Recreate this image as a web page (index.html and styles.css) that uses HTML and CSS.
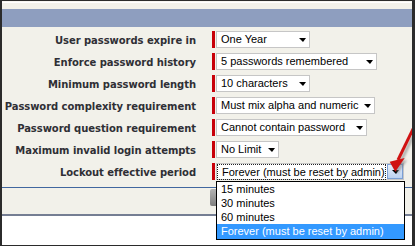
FILE: index.html
```html
<!DOCTYPE html>
<html>
<head>
<meta charset="utf-8">
<link rel="stylesheet" href="styles.css">
</head>
<body>
<div class="frame">
  <div class="topstrip"></div>
  <div class="band"></div>
  <div class="form">
    <div class="row">
      <div class="label">User passwords expire in</div>
      <div class="field"><span class="req"></span><div class="select w94"><span class="val">One Year</span><span class="caret"></span></div></div>
    </div>
    <div class="row">
      <div class="label">Enforce password history</div>
      <div class="field"><span class="req"></span><div class="select w161"><span class="val">5 passwords remembered</span><span class="caret"></span></div></div>
    </div>
    <div class="row">
      <div class="label">Minimum password length</div>
      <div class="field"><span class="req"></span><div class="select w94"><span class="val">10 characters</span><span class="caret"></span></div></div>
    </div>
    <div class="row">
      <div class="label">Password complexity requirement</div>
      <div class="field"><span class="req"></span><div class="select w159"><span class="val">Must mix alpha and numeric</span><span class="caret"></span></div></div>
    </div>
    <div class="row">
      <div class="label">Password question requirement</div>
      <div class="field"><span class="req"></span><div class="select w151"><span class="val">Cannot contain password</span><span class="caret"></span></div></div>
    </div>
    <div class="row">
      <div class="label">Maximum invalid login attempts</div>
      <div class="field"><span class="req"></span><div class="select w63"><span class="val">No Limit</span><span class="caret"></span></div></div>
    </div>
    <div class="row">
      <div class="label">Lockout effective period</div>
      <div class="field"><span class="req"></span><div class="select w187 focused"><span class="focus">Forever (must be reset by admin)</span><span class="btn"><span class="caret"></span></span></div></div>
    </div>
  </div>
  <div class="sep"></div>
  <div class="buttons"><span class="save"></span></div>
  <div class="rule"></div>
  <div class="white"></div>

  <ul class="list">
    <li>15 minutes</li>
    <li>30 minutes</li>
    <li>60 minutes</li>
    <li class="sel">Forever (must be reset by admin)</li>
  </ul>

  <svg class="pointer" width="34" height="66" viewBox="0 0 34 66">
    <defs>
      <filter id="blur" x="-50%" y="-50%" width="200%" height="200%">
        <feGaussianBlur stdDeviation="1.2"/>
      </filter>
    </defs>
    <g filter="url(#blur)" opacity="0.55" transform="translate(2.5,2)">
      <line x1="37" y1="10" x2="20" y2="45" stroke="#777" stroke-width="3"/>
      <polygon points="11.7,46.7 26.7,43 17.3,56.7" fill="#777"/>
    </g>
    <line x1="37" y1="10" x2="20" y2="45" stroke="#d01212" stroke-width="3"/>
    <polygon points="11.7,46.7 26.7,43 17.3,56.7" fill="#d01212"/>
  </svg>
</div>
</body>
</html>
```

FILE: styles.css
```css
html, body {
  margin: 0;
  padding: 0;
  background: #ffffff;
}

.frame {
  position: relative;
  box-sizing: border-box;
  width: 415px;
  height: 246px;
  border-top: 1px solid #2b2b2b;
  border-left: 2px solid #2b2b2b;
  border-right: 3px solid #2b2b2b;
  border-bottom: 1px solid #2b2b2b;
  background: #f2f1ea;
  overflow: hidden;
  display: flex;
  flex-direction: column;
}

.topstrip {
  height: 8px;
  background: linear-gradient(#f7f6f1 0, #f7f6f1 1px, #ffffff 1px, #ffffff 2px, #f2f1ea 2px);
}

.band {
  height: 18px;
  background: #8e9ebf;
}

.form {
  padding: 2px 0 4px 0;
  display: flex;
  flex-direction: column;
}

.row {
  display: flex;
  align-items: center;
  height: 22px;
}

.label {
  width: 194px;
  text-align: right;
  font-family: "DejaVu Sans", sans-serif;
  font-weight: bold;
  font-size: 10px;
  color: #2f2f35;
  white-space: nowrap;
  letter-spacing: -0.05px;
}

.field {
  margin-left: 16px;
  display: flex;
  align-items: center;
  margin-top: -1px;
}

.req {
  width: 3px;
  height: 17px;
  background: #c8000a;
  margin-right: 1px;
}

.select {
  box-sizing: border-box;
  height: 17px;
  background: #ffffff;
  border: 1px solid #c6c6c6;
  display: flex;
  align-items: center;
  font-family: "Liberation Sans", Arial, sans-serif;
  font-size: 11px;
  color: #000;
  white-space: nowrap;
}

.val {
  padding-left: 4px;
  line-height: 15px;
}

.caret {
  width: 0;
  height: 0;
  border-top: 4px solid #000;
  border-left: 4px solid transparent;
  border-right: 3px solid transparent;
  margin-left: auto;
  margin-right: 3px;
}

.w94 { width: 94px; }
.w161 { width: 161px; }
.w159 { width: 159px; }
.w151 { width: 151px; }
.w63 { width: 63px; }
.w187 { width: 188px; }

.focused {
  border-color: #c6c6c6;
  padding: 0;
}

.focus {
  box-sizing: border-box;
  width: 169px;
  height: 16px;
  margin-top: 1px;
  border: 1px dotted #222;
  padding-left: 4px;
  line-height: 14px;
}

.btn {
  box-sizing: border-box;
  width: 16px;
  height: 15px;
  margin-left: 1px;
  border: 1px solid #7b9fd4;
  background: linear-gradient(#e6effb, #bcd2f1);
  display: flex;
  align-items: center;
  justify-content: center;
}

.btn .caret {
  margin: 1px 0 0 0;
}

.sep {
  height: 1px;
  background: #41679f;
}

.buttons {
  height: 26px;
  display: flex;
  align-items: flex-start;
}

.save {
  margin-left: 208px;
  margin-top: 1px;
  width: 60px;
  height: 17px;
  background: linear-gradient(#b3b3b3, #7f7f7f);
  border-radius: 2px;
}

.rule {
  height: 2px;
  background: #757e93;
}

.white {
  flex: 1;
  background: #ffffff;
}

.list {
  position: absolute;
  left: 214px;
  top: 180px;
  margin: 0;
  padding: 0;
  list-style: none;
  width: 189px;
  box-sizing: border-box;
  border: 1px solid #000;
  background: #fff;
  font-family: "Liberation Sans", Arial, sans-serif;
  font-size: 11px;
  color: #000;
}

.list li {
  height: 14px;
  line-height: 14px;
  padding-left: 4px;
  white-space: nowrap;
}

.list li.sel {
  height: 15px;
  background: #3399ff;
  color: #fff;
}

.pointer {
  position: absolute;
  left: 376px;
  top: 114px;
}
```
